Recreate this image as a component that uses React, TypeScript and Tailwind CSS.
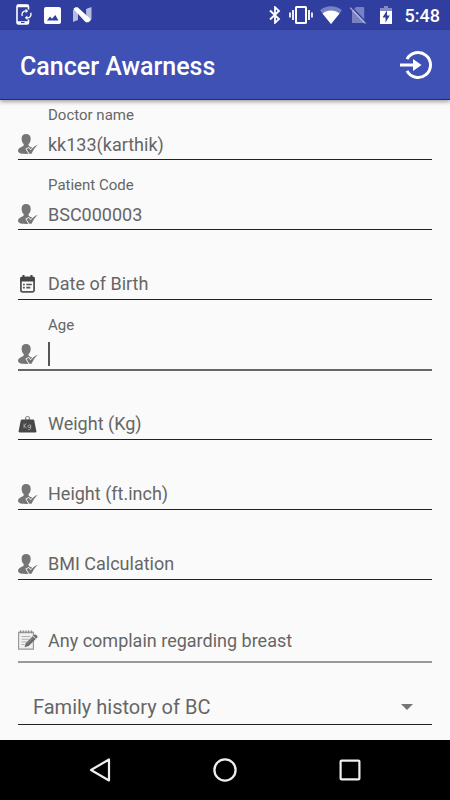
import React, { useState } from 'react';

type IconKind = 'person' | 'calendar' | 'weight' | 'note';

interface FieldProps {
  id: string;
  label: string;
  icon?: IconKind;
  initial?: string;
  active?: boolean;
}

const PersonIcon = () => (
  <svg viewBox="0 0 20 20" className="w-5 h-5 shrink-0" fill="#757575" aria-hidden="true">
    <path d="M8 0C5.200 0 3.500 2 3.600 4.700c.1 2.500.9 4.300 2.100 5.400.3 1.200-.1 1.900-1.300 2.500C2.100 13.700.1 14.600 0 16.800c0 1.800 1.900 2.800 4.300 3 3 .2 5.800.2 8.500-.2l2-5.200c-.8-.8-2-1.300-3.200-1.900-.9-.5-1.200-1.200-1-2.400 1.300-1.100 2.100-2.900 2.100-5.400C12.700 2 10.900 0 8 0z" />
    <path d="M8.500 15l2.200-1.100 2.100 2.300c1.700-2.400 3.800-4.200 7-5.500-2.800 2.500-4.600 5.200-6.200 9.100h-2.300z" stroke="#fafafa" strokeWidth="1.600" paintOrder="stroke" />
  </svg>
);

const CalendarIcon = () => (
  <svg viewBox="0 0 20 20" className="w-5 h-5 shrink-0" aria-hidden="true">
    <rect x="2.900" y="3.400" width="13.200" height="14.400" rx="1.500" fill="none" stroke="#555" strokeWidth="1.800" />
    <path d="M2.500 3h14v4.500h-14z" fill="#444" />
    <path d="M5.500 1v3M13.500 1v3" stroke="#444" strokeWidth="2" />
    <path d="M5 10.500h1.800M8.300 10.500h5.500M5 13.600h1.800M8.300 13.600h4" stroke="#555" strokeWidth="1.600" />
  </svg>
);

const WeightIcon = () => (
  <svg viewBox="0 0 20 20" className="w-5 h-5 shrink-0" aria-hidden="true">
    <circle cx="9.500" cy="4.500" r="2" fill="none" stroke="#888" strokeWidth="1.200" />
    <path d="M3.800 5.500h11.400c.5 0 .8.3 1 .8l2.200 11c.1.700-.2 1.200-1 1.200H1.600c-.8 0-1.100-.5-1-1.200l2.200-11c.2-.5.5-.8 1-.8z" fill="#484848" />
    <path d="M6 9.500v4.500M8.500 9.500L6 12l2.700 2M12.600 11h-1.500c-1.600 0-1.600 2.500 0 2.500h1.500V11v3.600c0 1-2 1.300-2.700.6" fill="none" stroke="#aaa" strokeWidth="0.900" />
  </svg>
);

const NoteIcon = () => (
  <svg viewBox="0 0 20 20" className="w-5 h-5 shrink-0" aria-hidden="true">
    <path d="M.6 2.500h14.800v16.700H.6z" fill="#f1f1f1" stroke="#999" strokeWidth="1.200" />
    <path d="M.6 2.300h15" stroke="#999" strokeWidth="1.600" />
    <path d="M2.500.3v3M5.200.3v3M7.900.3v3M10.600.3v3M13.300.3v3" stroke="#888" strokeWidth="1" />
    <path d="M3.500 6.500h9M3.500 9.200h7.500M3.500 11.900h5M3.500 14.600h3" stroke="#b0b0b0" strokeWidth="1" />
    <path d="M6.500 17.200l1.300-4.200 8.500-8.200c1.300-.8 3.700 1.200 3 2.700L10.700 16z" fill="#6b6b6b" />
    <path d="M9 13.500l7.500-7.200" stroke="#999" strokeWidth="0.800" />
    <path d="M15 6l3 2.800" stroke="#e5e5e5" strokeWidth="0.800" />
  </svg>
);

const icons: Record<IconKind, React.FC> = {
  person: PersonIcon,
  calendar: CalendarIcon,
  weight: WeightIcon,
  note: NoteIcon,
};

const Field: React.FC<FieldProps> = ({ id, label, icon = 'person', initial = '', active = false }) => {
  const [value, setValue] = useState(initial);
  const Icon = icons[icon];
  const floating = active || value !== '';
  const showCaret = active && value === '';

  return (
    <div>
      <div className="h-5 pl-[30px] text-[15px] leading-5">
        {floating && <label htmlFor={id}>{label}</label>}
      </div>
      <div className={active
        ? 'flex items-center gap-[10px] h-9 pt-1 border-b-2 border-[#666]'
        : 'flex items-center gap-[10px] h-[35px] pt-1 mb-px border-b border-[#212121]'}
      >
        <Icon />
        {/* The hint shares one cell with the input until something is typed */}
        <div className="flex-1 grid items-center text-[18px]">
          {!floating && (
            <label htmlFor={id} className="col-start-1 row-start-1 leading-7">{label}</label>
          )}
          {showCaret && <span className="col-start-1 row-start-1 w-[2px] h-6 bg-[#555]" />}
          <input
            id={id}
            type="text"
            value={value}
            onChange={e => setValue(e.target.value)}
            className={showCaret
              ? 'col-start-1 row-start-1 w-full h-7 bg-transparent outline-none caret-transparent'
              : 'col-start-1 row-start-1 w-full h-7 bg-transparent outline-none'}
          />
        </div>
      </div>
    </div>
  );
};

const StatusBar = () => (
  <div className="flex items-center justify-between h-[30px] pl-4 pr-[10px] bg-[#303f9f] text-white">
    <div className="flex items-center gap-3">
      {/* Phone sync */}
      <svg viewBox="0 0 16 22" className="w-4 h-[22px]" fill="none" stroke="#fff" aria-hidden="true">
        <path d="M12.500 5.500V2.500c0-1-.5-1.500-1.500-1.500H2.500C1.500 1 1 1.500 1 2.500v16c0 1 .5 1.500 1.500 1.500H11c1 0 1.500-.5 1.500-1.500v-3" strokeWidth="1.600" />
        <path d="M1 2h11.500M1 18.500h11.500" strokeWidth="2.400" />
        <path d="M6.300 12c-1-3 1-5.300 3.700-5M14.700 8.800c1 3-1 5.300-3.700 5" strokeWidth="1.300" />
        <path d="M9.600 4.800v4.400L12.200 7zM11.400 11.600V16l-2.600-2.200z" fill="#fff" stroke="none" />
        <path d="M5 18.500h3.500" stroke="#303f9f" strokeWidth="1" />
      </svg>
      {/* Picture */}
      <svg viewBox="0 0 17 17" className="w-[17px] h-[17px]" aria-hidden="true">
        <rect width="17" height="17" rx="2" fill="#fff" />
        <path d="M3 13.500l3-4 2 2.300L11.300 8l3.200 5.500z" fill="#303f9f" />
      </svg>
      <svg viewBox="0 0 19 16" className="w-[19px] h-4" aria-hidden="true">
        <path d="M0 3l5-3v13l-5 2zM13 2l5.500-2v12l-5 3.500z" fill="#fff" fillOpacity="0.650" />
        <path d="M.5 2C1.500 0 4-.5 5.500 1L18 12.500c-1 2.500-4 3.800-6 2z" fill="#fff" />
      </svg>
    </div>
    <div className="flex items-center">
      {/* Bluetooth */}
      <svg viewBox="0 0 12 18" className="w-3 h-[18px] mr-2" fill="none" stroke="#fff" strokeWidth="1.800" aria-hidden="true">
        <path d="M1 4.500l9 8.500-4 3.800V1.200L10 5l-9 8.500" />
      </svg>
      {/* Vibrate */}
      <svg viewBox="0 0 24 18" className="w-6 h-[18px] mr-[7px]" fill="none" stroke="#fff" aria-hidden="true">
        <rect x="7" y="1" width="10" height="16" rx="0.500" strokeWidth="2" />
        <path d="M4 4v10M20 4v10" strokeWidth="1.800" />
        <path d="M1 6.500v5M23 6.500v5" strokeWidth="1.700" />
      </svg>
      {/* Wifi */}
      <svg viewBox="0 0 22 18" className="w-[22px] h-[18px] mr-2" aria-hidden="true">
        <path d="M11 18L0 4.200C6-1.200 16-1.200 22 4.200z" fill="#fff" fillOpacity="0.350" />
        <path d="M11 18L2.500 7.500c4.500-4 12.500-4 17 0z" fill="#fff" />
      </svg>
      {/* No SIM */}
      <svg viewBox="0 0 16 18" className="w-4 h-[18px] mr-[14px]" aria-hidden="true">
        <path d="M6 1h7c.7 0 1.200.5 1.200 1.200V17H2V5z" fill="#fff" fillOpacity="0.350" />
        <path d="M1.500 1l14 15" stroke="#303f9f" strokeWidth="1.600" />
        <path d="M0 1.500l15.500 16" stroke="#fff" strokeOpacity="0.500" strokeWidth="1.400" />
      </svg>
      {/* Battery */}
      <svg viewBox="0 0 12 18" className="w-3 h-[18px] mr-[13px]" aria-hidden="true">
        <path d="M4 0h4v2h4v3H0V2h4z" fill="#fff" fillOpacity="0.400" />
        <path d="M0 5h12v13H0z" fill="#fff" />
        <path d="M7 4.500L2.500 11.500h3v5L9.800 9.500H7z" fill="#303f9f" />
      </svg>
      <span className="pt-[2px] text-[18px] leading-7 font-medium">5:48</span>
    </div>
  </div>
);

const AppBar = () => (
  <header className="relative z-10 flex items-center justify-between h-[70px] pl-5 pr-[17px] bg-[#3f51b5] border-b border-[#0d2aa0] text-white shadow-[0_2px_4px_rgba(0,0,0,0.35)]">
    <h1 className="pt-1 text-[25px] font-medium">Cancer Awarness</h1>
    <button type="button" aria-label="Log out">
      <svg viewBox="0 0 33 30" className="w-[33px] h-[30px]" fill="none" stroke="#fff" aria-hidden="true">
        <path d="M7 9.100A12.500 12.500 0 1 1 7 20.900" strokeWidth="3" />
        <path d="M0 15h15" strokeWidth="3" />
        <path d="M13 9l8.500 6-8.500 6z" fill="#fff" stroke="none" />
      </svg>
    </button>
  </header>
);

const NavBar = () => (
  <nav className="flex justify-center h-[60px] bg-black">
    <button type="button" aria-label="Back" className="w-[125px] flex items-center justify-center">
      <svg viewBox="0 0 24 24" className="w-6 h-6" fill="none" stroke="#eee" strokeWidth="2.200" strokeLinejoin="round" aria-hidden="true">
        <path d="M21 1.500v21L3 12z" />
      </svg>
    </button>
    <button type="button" aria-label="Home" className="w-[125px] flex items-center justify-center">
      <svg viewBox="0 0 24 24" className="w-6 h-6" fill="none" stroke="#eee" strokeWidth="2.300" aria-hidden="true">
        <circle cx="12" cy="12" r="10.600" />
      </svg>
    </button>
    <button type="button" aria-label="Recent apps" className="w-[125px] flex items-center justify-center">
      <svg viewBox="0 0 24 24" className="w-6 h-6" fill="none" stroke="#eee" strokeWidth="2.200" aria-hidden="true">
        <rect x="2.600" y="2.600" width="18.800" height="18.800" rx="1" />
      </svg>
    </button>
  </nav>
);

export default function App() {
  return (
    <div className="min-h-screen flex flex-col bg-[#fafafa] font-[Roboto,sans-serif]">
      <StatusBar />
      <AppBar />

      <main className="flex-1 px-[18px] pt-[5px]">
        <form className="flex flex-col gap-[14px] text-[#666]">
          <Field id="doctor" label="Doctor name" initial="kk133(karthik)" />
          <Field id="patient" label="Patient Code" initial="BSC000003" />
          <Field id="dob" label="Date of Birth" icon="calendar" />
          <Field id="age" label="Age" active />
          <Field id="weight" label="Weight (Kg)" icon="weight" />
          <Field id="height" label="Height (ft.inch)" />
          <Field id="bmi" label="BMI Calculation" />

          <div className="flex items-center gap-[10px] h-11 mt-6 border-b-2 border-[#999]">
            <NoteIcon />
            <input
              type="text"
              aria-label="Any complain regarding breast"
              placeholder="Any complain regarding breast"
              className="flex-1 min-w-0 h-7 bg-transparent text-[18px] placeholder:text-[#666] outline-none"
            />
          </div>

          {/* Family history spinner */}
          <div className="relative h-12 border-b border-[#212121]">
            <select
              aria-label="Family history of BC"
              className="appearance-none w-full h-full pl-[15px] pt-3 bg-transparent text-[20px] outline-none"
            >
              <option>Family history of BC</option>
            </select>
            <svg viewBox="0 0 12 6" className="absolute right-[19px] bottom-[14px] w-3 h-[6px]" aria-hidden="true">
              <path d="M0 0h12L6 6z" fill="#757575" />
            </svg>
          </div>
        </form>
      </main>

      <NavBar />
    </div>
  );
}
